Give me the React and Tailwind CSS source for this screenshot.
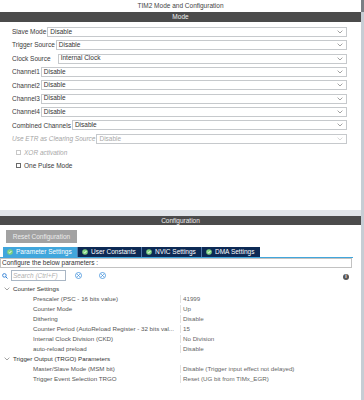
import React from "react";

const font = { fontFamily: '"Liberation Sans", Arial, sans-serif' };

const Chevron = ({ className = "" }) => (
  <svg width="6" height="4" viewBox="0 0 6 4" className={className}>
    <path d="M0.6 0.6 L3 3 L5.4 0.6" fill="none" stroke="currentColor" strokeWidth="0.8" />
  </svg>
);

const CheckDot = () => (
  <svg width="6" height="6" viewBox="0 0 6 6" className="shrink-0">
    <circle cx="3" cy="3" r="2.8" fill="#7fd27f" />
    <path d="M1.6 3.1 L2.6 4 L4.4 2" fill="none" stroke="#fff" strokeWidth="0.9" />
  </svg>
);

const CircleX = () => (
  <svg width="7" height="7" viewBox="0 0 7 7">
    <circle cx="3.5" cy="3.5" r="3" fill="none" stroke="#3f8fdc" strokeWidth="0.8" />
    <path d="M2.2 2.2 L4.8 4.8 M4.8 2.2 L2.2 4.8" stroke="#3f8fdc" strokeWidth="0.8" />
  </svg>
);

const Select = ({ value, disabled }) => (
  <div
    className={`flex-1 h-[10px] flex items-center justify-between border border-[#c6c9cc] bg-white pl-[2px] pr-[3px] ${
      disabled ? "text-[#a9a9a9]" : "text-[#333]"
    }`}
  >
    <span className="leading-none">{value}</span>
    <Chevron className={disabled ? "text-[#cfcfcf]" : "text-[#8c8c8c]"} />
  </div>
);

const modeRows = [
  { label: "Slave Mode", value: "Disable" },
  { label: "Trigger Source", value: "Disable" },
  { label: "Clock Source", value: "Internal Clock", wide: true },
  { label: "Channel1", value: "Disable" },
  { label: "Channel2", value: "Disable" },
  { label: "Channel3", value: "Disable" },
  { label: "Channel4", value: "Disable" },
  { label: "Combined Channels", value: "Disable" },
  { label: "Use ETR as Clearing Source", value: "Disable", disabled: true },
];

const tabs = [
  { name: "Parameter Settings", w: "w-[74px]", active: true },
  { name: "User Constants", w: "w-[64px]" },
  { name: "NVIC Settings", w: "w-[60px]" },
  { name: "DMA Settings", w: "w-[59px]" },
];

const tree = [
  {
    group: "Counter Settings",
    items: [
      ["Prescaler (PSC - 16 bits value)", "41999"],
      ["Counter Mode", "Up"],
      ["Dithering", "Disable"],
      ["Counter Period (AutoReload Register - 32 bits val...", "15"],
      ["Internal Clock Division (CKD)", "No Division"],
      ["auto-reload preload", "Disable"],
    ],
  },
  {
    group: "Trigger Output (TRGO) Parameters",
    items: [
      ["Master/Slave Mode (MSM bit)", "Disable (Trigger input effect not delayed)"],
      ["Trigger Event Selection TRGO", "Reset (UG bit from TIMx_EGR)"],
    ],
  },
];

export default function App() {
  return (
    <div className="w-[364px] h-[400px] bg-white flex text-[6.5px] overflow-hidden" style={font}>
      <div className="flex-1 flex flex-col">
        {/* Title */}
        <div className="h-[12px] flex items-center justify-center text-[#444]">
          TIM2 Mode and Configuration
        </div>

        {/* Mode */}
        <div className="h-[10px] bg-[#4b4b4b] text-[#f0f0f0] flex items-center justify-center">Mode</div>
        <div className="h-[188px] flex flex-col pt-[5px] pl-[12px] pr-[14px]">
          <div className="flex flex-col gap-[3.35px]">
            {modeRows.map((r) => (
              <div key={r.label} className={`flex items-center h-[10px] ${r.wide ? "gap-[7px]" : "gap-[1px]"}`}>
                <span className={r.disabled ? "italic text-[#a5a5a5]" : "text-[#3a3a3a]"}>{r.label}</span>
                <Select value={r.value} disabled={r.disabled} />
              </div>
            ))}
          </div>
          <div className="flex items-center gap-[3px] pl-[4px] mt-[5px] h-[8px] italic text-[#a8a8a8]">
            <span className="w-[5px] h-[5px] border border-[#c8c8c8] bg-white" />
            XOR activation
          </div>
          <div className="flex items-center gap-[3px] pl-[4px] mt-[5px] h-[8px] text-[#3a3a3a]">
            <span className="w-[5px] h-[5px] border border-[#6a6a6a] bg-white" />
            One Pulse Mode
          </div>
        </div>

        {/* Splitter */}
        <div className="h-[6px] bg-[#e1e5e9]" />

        {/* Configuration */}
        <div className="h-[9px] bg-[#4b4b4b] text-[#f0f0f0] flex items-center justify-center">Configuration</div>
        <div className="ml-[6px] mt-[5px] w-[71px] h-[13px] bg-[#a2a2a2] text-[#ececec] flex items-center justify-center">
          Reset Configuration
        </div>

        <div className="mt-[4px] ml-[3px] flex h-[10px]">
          {tabs.map((t) => (
            <div
              key={t.name}
              className={`${t.w} flex items-center gap-[3px] pl-[4px] text-white ${
                t.active ? "bg-[#41a6dc]" : "bg-[#0d2a55] border-l border-[#4e79a8]"
              }`}
            >
              <CheckDot />
              <span>{t.name}</span>
            </div>
          ))}
        </div>
        <div className="h-[1px] w-[353px] bg-[#41a6dc]" />
        <div className="w-[352px] h-[10px] border border-[#c2c2c2] flex items-center pl-[1px] text-[#333]">
          Configure the below parameters :
        </div>

        {/* Search */}
        <div className="mt-[2px] h-[11px] flex items-center pr-[12px]">
          <svg width="6" height="6" viewBox="0 0 6 6" className="ml-[2px]">
            <circle cx="2.4" cy="2.4" r="1.8" fill="none" stroke="#2f7fd4" strokeWidth="0.9" />
            <path d="M3.7 3.7 L5.5 5.5" stroke="#2f7fd4" strokeWidth="1" />
          </svg>
          <div className="ml-[3px] w-[55px] h-[11px] border border-[#a9b6c4] flex items-center pl-[1px] italic text-[#b0b0b0]">
            Search (Ctrl+F)
          </div>
          <div className="ml-[9px]"><CircleX /></div>
          <div className="ml-[17px]"><CircleX /></div>
          <div className="ml-auto mt-[2px] w-[6px] h-[6px] rounded-full bg-[#575757] text-white text-[5px] font-bold flex items-center justify-center leading-none">
            i
          </div>
        </div>

        {/* Tree */}
        <div className="mt-[3px] flex flex-col text-[6.2px]">
          {tree.map((g) => (
            <div key={g.group} className="flex flex-col">
              <div className="h-[10px] flex items-center text-[#333]">
                <Chevron className="ml-[4px] mr-[3px] text-[#8c8c8c]" />
                {g.group}
              </div>
              {g.items.map(([k, v]) => (
                <div key={k} className="h-[10px] flex items-center text-[#555]">
                  <span className="pl-[33px] w-[180px] shrink-0 whitespace-nowrap overflow-hidden">{k}</span>
                  <span className="border-l border-[#e2e2e2] pl-[2px] h-[8px] flex items-center text-[#666] whitespace-nowrap">{v}</span>
                </div>
              ))}
            </div>
          ))}
        </div>
      </div>

      {/* scrollbar strip */}
      <div className="w-[3px] flex flex-col">
        <div className="h-[12px] bg-[#7a7f85]" />
        <div className="flex-1 bg-[#c6cdd4]" />
      </div>
    </div>
  );
}
